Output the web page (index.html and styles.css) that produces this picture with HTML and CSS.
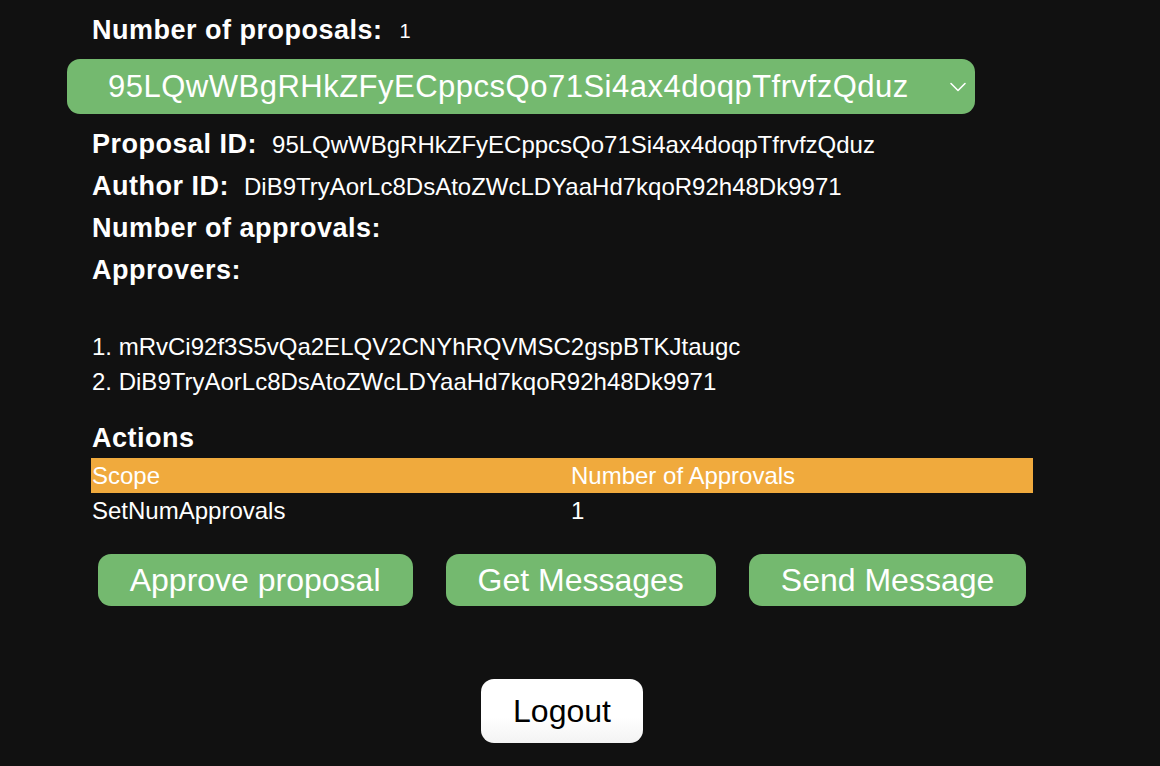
FILE: index.html
```html
<!DOCTYPE html>
<html>
<head>
<meta charset="utf-8">
<link rel="stylesheet" href="styles.css">
</head>
<body>
<main class="page">
  <div class="row first"><span class="label">Number of proposals:</span><span class="small">1</span></div>
  <div class="select">
    <span class="select-text">95LQwWBgRHkZFyECppcsQo71Si4ax4doqpTfrvfzQduz</span>
    <svg class="chevron" width="18" height="12" viewBox="0 0 18 12"><path d="M2 2.5 L9 9.5 L16 2.5" fill="none" stroke="#fff" stroke-width="1.6" stroke-linecap="round" stroke-linejoin="round"/></svg>
  </div>
  <div class="row gap-top"><span class="label">Proposal ID:</span><span class="value">95LQwWBgRHkZFyECppcsQo71Si4ax4doqpTfrvfzQduz</span></div>
  <div class="row"><span class="label">Author ID:</span><span class="value">DiB9TryAorLc8DsAtoZWcLDYaaHd7kqoR92h48Dk9971</span></div>
  <div class="row"><span class="label">Number of approvals:</span></div>
  <div class="row"><span class="label">Approvers:</span></div>
  <ol class="approvers">
    <li>mRvCi92f3S5vQa2ELQV2CNYhRQVMSC2gspBTKJtaugc</li>
    <li>DiB9TryAorLc8DsAtoZWcLDYaaHd7kqoR92h48Dk9971</li>
  </ol>
  <div class="heading">Actions</div>
  <div class="table">
    <div class="thead">
      <div class="cell">Scope</div>
      <div class="cell">Number of Approvals</div>
    </div>
    <div class="trow">
      <div class="cell">SetNumApprovals</div>
      <div class="cell">1</div>
    </div>
  </div>
  <div class="buttons">
    <button class="btn">Approve proposal</button>
    <button class="btn">Get Messages</button>
    <button class="btn">Send Message</button>
  </div>
  <div class="logout-wrap">
    <button class="logout">Logout</button>
  </div>
</main>
</body>
</html>
```

FILE: styles.css
```css
html, body {
  margin: 0;
  padding: 0;
  background: #111111;
  color: #ffffff;
  font-family: "Liberation Sans", Arial, Helvetica, sans-serif;
}

.page {
  width: 942px;
  margin-left: 91px;
  padding-top: 9px;
}

.row {
  display: flex;
  align-items: baseline;
  height: 42px;
  line-height: 42px;
  padding-left: 1px;
  white-space: nowrap;
}

.row.first {
  margin-bottom: 8px;
}

.row.gap-top {
  margin-top: 9px;
}

.label {
  font-size: 27px;
  font-weight: bold;
  letter-spacing: 0.5px;
  margin-right: 15px;
}

.small {
  font-size: 20px;
  margin-left: 2px;
  position: relative;
  top: -1px;
}

.value {
  font-size: 24px;
}

.select {
  margin-left: -24px;
  width: 908px;
  height: 55px;
  box-sizing: border-box;
  background: #74b96f;
  border-radius: 13px;
  display: flex;
  align-items: center;
  justify-content: space-between;
  padding: 0 8px 0 41px;
}

.select-text {
  font-size: 31px;
  letter-spacing: 0.5px;
  line-height: 34px;
}

.chevron {
  display: block;
  margin-top: 1px;
}

.approvers {
  margin: 38px 0 0 0;
  padding: 0 0 0 1px;
  list-style: none;
  counter-reset: item;
}

.approvers li {
  font-size: 24px;
  line-height: 35px;
  counter-increment: item;
}

.approvers li::before {
  content: counter(item) ". ";
}

.heading {
  margin-top: 21px;
  font-size: 27px;
  font-weight: bold;
  letter-spacing: 0.5px;
  line-height: 36px;
  padding-left: 1px;
}

.table {
  margin-top: 2px;
  width: 942px;
  font-size: 24px;
}

.thead, .trow {
  display: grid;
  grid-template-columns: 479px 1fr;
  height: 35px;
  line-height: 35px;
}

.thead {
  background: #f0aa3d;
}

.cell {
  padding-left: 1px;
}

.buttons {
  display: flex;
  justify-content: center;
  gap: 33px;
  margin-top: 26px;
}

.btn {
  background: #74b96f;
  color: #ffffff;
  border: none;
  border-radius: 13px;
  font-family: "Liberation Sans", Arial, Helvetica, sans-serif;
  font-size: 32px;
  line-height: 36px;
  height: 52px;
  padding: 0 32px;
}

.logout-wrap {
  display: flex;
  justify-content: center;
  margin-top: 73px;
}

.logout {
  background: linear-gradient(#ffffff 60%, #f3f3f3);
  color: #000000;
  border: none;
  border-radius: 13px;
  font-family: "Liberation Sans", Arial, Helvetica, sans-serif;
  font-size: 32px;
  line-height: 36px;
  height: 64px;
  padding: 0 32px;
}
```
